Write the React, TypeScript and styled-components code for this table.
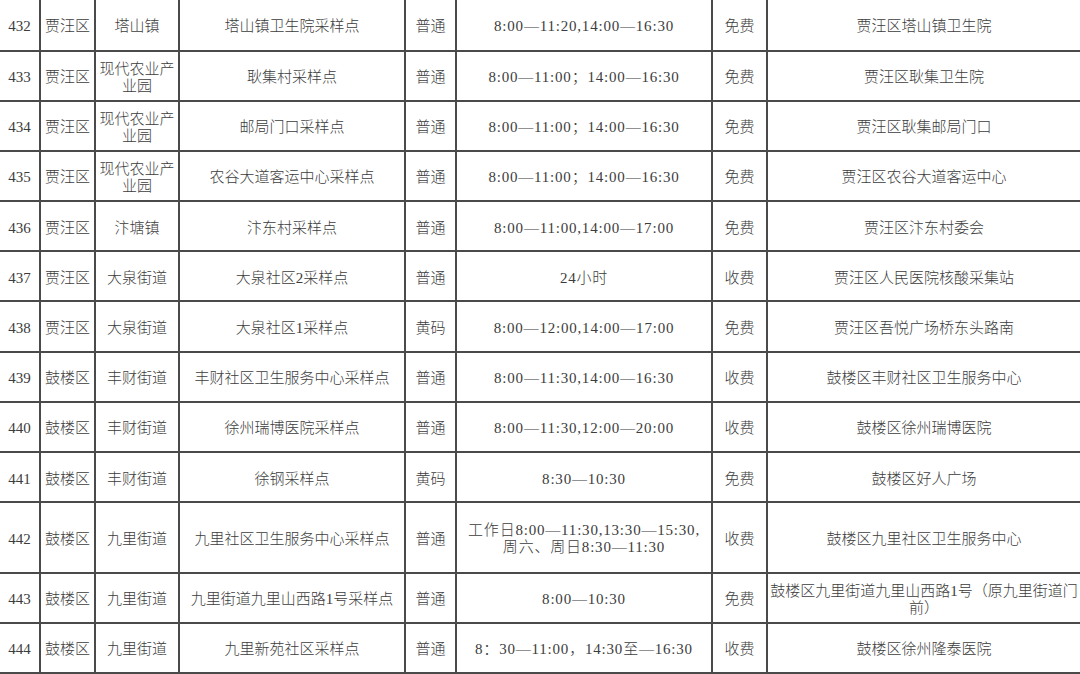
import React, { FC } from "react"
import styled, { createGlobalStyle } from 'styled-components'

const GlobalStyle = createGlobalStyle({
  'html, body': {
    margin: 0,
    padding: 0,
    background: '#fff',
  },
  body: {
    fontFamily: '"Liberation Serif", "Noto Sans CJK SC", serif',
    color: '#333',
  },
})

type Site = {
  no: string
  district: string
  town: string
  name: string
  kind: string
  time: string
  fee: string
  address: string
  height: number
}

const sites: Site[] = [
  { no: '432', district: '贾汪区', town: '塔山镇', name: '塔山镇卫生院采样点', kind: '普通', time: '8:00—11:20,14:00—16:30', fee: '免费', address: '贾汪区塔山镇卫生院', height: 51.5 },
  { no: '433', district: '贾汪区', town: '现代农业产业园', name: '耿集村采样点', kind: '普通', time: '8:00—11:00；14:00—16:30', fee: '免费', address: '贾汪区耿集卫生院', height: 50.2 },
  { no: '434', district: '贾汪区', town: '现代农业产业园', name: '邮局门口采样点', kind: '普通', time: '8:00—11:00；14:00—16:30', fee: '免费', address: '贾汪区耿集邮局门口', height: 50.2 },
  { no: '435', district: '贾汪区', town: '现代农业产业园', name: '农谷大道客运中心采样点', kind: '普通', time: '8:00—11:00；14:00—16:30', fee: '免费', address: '贾汪区农谷大道客运中心', height: 50.2 },
  { no: '436', district: '贾汪区', town: '汴塘镇', name: '汴东村采样点', kind: '普通', time: '8:00—11:00,14:00—17:00', fee: '免费', address: '贾汪区汴东村委会', height: 50.2 },
  { no: '437', district: '贾汪区', town: '大泉街道', name: '大泉社区2采样点', kind: '普通', time: '24小时', fee: '收费', address: '贾汪区人民医院核酸采集站', height: 50.2 },
  { no: '438', district: '贾汪区', town: '大泉街道', name: '大泉社区1采样点', kind: '黄码', time: '8:00—12:00,14:00—17:00', fee: '免费', address: '贾汪区吾悦广场桥东头路南', height: 50.2 },
  { no: '439', district: '鼓楼区', town: '丰财街道', name: '丰财社区卫生服务中心采样点', kind: '普通', time: '8:00—11:30,14:00—16:30', fee: '收费', address: '鼓楼区丰财社区卫生服务中心', height: 50.2 },
  { no: '440', district: '鼓楼区', town: '丰财街道', name: '徐州瑞博医院采样点', kind: '普通', time: '8:00—11:30,12:00—20:00', fee: '收费', address: '鼓楼区徐州瑞博医院', height: 50.2 },
  { no: '441', district: '鼓楼区', town: '丰财街道', name: '徐钢采样点', kind: '黄码', time: '8:30—10:30', fee: '免费', address: '鼓楼区好人广场', height: 50.2 },
  { no: '442', district: '鼓楼区', town: '九里街道', name: '九里社区卫生服务中心采样点', kind: '普通', time: '工作日8:00—11:30,13:30—15:30,\n周六、周日8:30—11:30', fee: '收费', address: '鼓楼区九里社区卫生服务中心', height: 70.4 },
  { no: '443', district: '鼓楼区', town: '九里街道', name: '九里街道九里山西路1号采样点', kind: '普通', time: '8:00—10:30', fee: '免费', address: '鼓楼区九里街道九里山西路1号（原九里街道门\n前）', height: 50 },
  { no: '444', district: '鼓楼区', town: '九里街道', name: '九里新苑社区采样点', kind: '普通', time: '8：30—11:00，14:30至—16:30', fee: '收费', address: '鼓楼区徐州隆泰医院', height: 50 },
]

const Sheet = styled.div({
  width: '1080px',
  height: '674px',
  overflow: 'hidden',
  display: 'flex',
  flexDirection: 'column',
})

const Row = styled.div<{ $height: number }>`
  display: grid;
  grid-template-columns: 41px 55px 84px 226px 51px 256px 55px 1fr;
  height: ${p => p.$height}px;
  flex-shrink: 0;
`

const Cell = styled.div<{ $last?: boolean; $spaced?: boolean }>`
  box-sizing: border-box;
  display: flex;
  align-items: center;
  justify-content: center;
  text-align: center;
  padding: 4px 2px 0;
  font-size: 15px;
  font-weight: 300;
  line-height: 17px;
  color: #3c3c3c;
  white-space: pre-line;
  border-bottom: 2px solid #4a4a4a;
  border-right: ${p => (p.$last ? 'none' : '2px solid #4a4a4a')};
  letter-spacing: ${p => (p.$spaced ? '0.8px' : '0')};
  overflow: hidden;
`

export default function App() {
  return (
    <>
      <GlobalStyle />
      <Sheet>
        {sites.map(s => (
          <Row key={s.no} $height={s.height}>
            <Cell>{s.no}</Cell>
            <Cell>{s.district}</Cell>
            <Cell>{s.town}</Cell>
            <Cell>{s.name}</Cell>
            <Cell>{s.kind}</Cell>
            <Cell $spaced>{s.time}</Cell>
            <Cell>{s.fee}</Cell>
            <Cell $last>{s.address}</Cell>
          </Row>
        ))}
      </Sheet>
    </>
  )
}
